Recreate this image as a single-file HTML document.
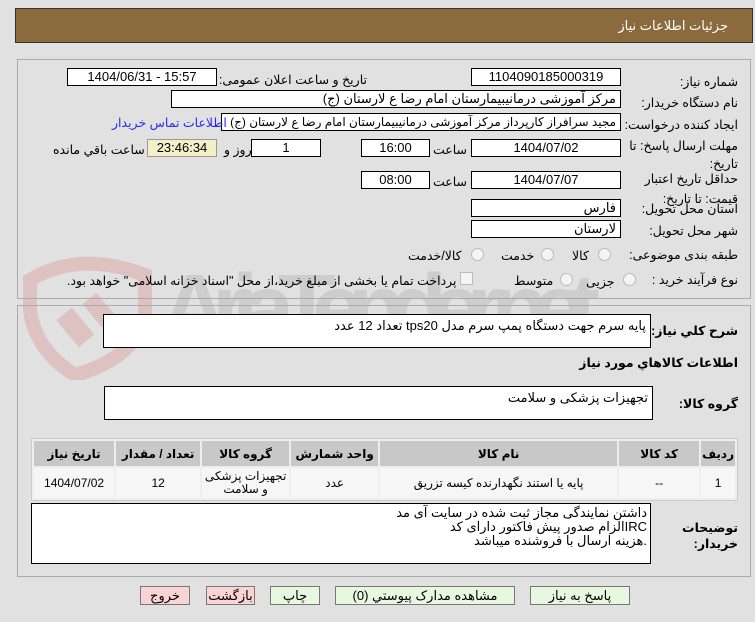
<!DOCTYPE html>
<html dir="rtl"><head><meta charset="utf-8"><style>
body{margin:0;width:755px;height:622px;background:#e1e1e1;font-family:"Liberation Sans","DejaVu Sans",sans-serif;font-size:12.5px;color:#000;position:relative;overflow:hidden}
.a{position:absolute;white-space:nowrap}
.in{position:absolute;background:#fff;border:1px solid #000;box-sizing:border-box;text-align:center;line-height:16px;font-size:13px;white-space:nowrap;overflow:hidden}
.r{text-align:right;padding-right:4px}
.lb{position:absolute;right:17px;text-align:right;white-space:nowrap}
.rad{position:absolute;width:11px;height:11px;border-radius:50%;border:1px solid #bbb;background:#f4f4f4}
.btn{position:absolute;height:19px;border:1px solid #777;box-sizing:border-box;text-align:center;line-height:17px;font-size:13px}
table{position:absolute;left:31px;top:438px;width:707px;border-collapse:separate;border-spacing:2px;background:#eee;border:1px solid #ccc;font-size:12px}
th{background:#c8c8c8;height:23px;font-weight:bold}
td{background:#f6f6f6;height:28px;text-align:center}
</style></head><body>
<div class="a" style="left:15px;top:8px;width:738px;height:35px;background:#8b6a3e;border:1px solid #333;box-sizing:border-box"></div>
<div class="a" style="right:27px;top:18px;color:#fff;font-size:13px">جزئیات اطلاعات نیاز</div>

<svg class="a" style="left:20px;top:250px;opacity:0.35" width="600" height="130" viewBox="0 0 600 130" direction="ltr">
<path d="M10 30 Q60 0 125 25 L125 70 Q110 110 55 125 Q15 100 10 60Z" fill="none" stroke="#d98a8a" stroke-width="14"/>
<rect x="45" y="60" width="20" height="35" fill="#d98a8a" transform="rotate(-40 55 77)"/>
<rect x="70" y="45" width="18" height="30" fill="#d98a8a" transform="rotate(-40 79 60)"/>
<text x="140" y="90" font-size="95" font-weight="bold" fill="#aaa" font-family="Liberation Sans" textLength="440">AriaTender.net</text>
</svg>

<div class="a" style="left:17px;top:59px;width:734px;height:240px;border:1px solid #aaa;box-sizing:border-box"></div>
<div class="a" style="left:17px;top:305px;width:734px;height:272px;border:1px solid #aaa;box-sizing:border-box"></div>

<div class="lb" style="top:74px">شماره نیاز:</div>
<div class="in" style="left:471px;top:68px;width:150px;height:18px">1104090185000319</div>
<div class="a" style="right:388px;top:72px">تاریخ و ساعت اعلان عمومی:</div>
<div class="in" style="left:67px;top:68px;width:150px;height:18px" dir="ltr">1404/06/31 - 15:57</div>

<div class="lb" style="top:95px">نام دستگاه خریدار:</div>
<div class="in r" style="left:171px;top:90px;width:450px;height:18px">مرکز آموزشی درمانیبیمارستان امام رضا  ع  لارستان (ج)</div>

<div class="lb" style="top:117px">ایجاد کننده درخواست:</div>
<div class="in r" style="left:221px;top:113px;width:400px;height:18px;font-size:12px">مجید سرافراز کارپرداز  مرکز آموزشی درمانیبیمارستان امام رضا  ع  لارستان (ج)</div>
<div class="a" style="left:112px;top:115px;color:#2a2aee">اطلاعات تماس خریدار</div>

<div class="lb" style="top:137px;line-height:18px">مهلت ارسال پاسخ: تا<br>تاریخ:</div>
<div class="in" style="left:471px;top:139px;width:150px;height:18px">1404/07/02</div>
<div class="a" style="left:433px;top:142px">ساعت</div>
<div class="in" style="left:361px;top:139px;width:69px;height:18px">16:00</div>
<div class="in" style="left:251px;top:139px;width:70px;height:18px">1</div>
<div class="a" style="left:224px;top:142px">روز و</div>
<div class="in" style="left:147px;top:139px;width:70px;height:18px;background:#f3f0c8;border-color:#999">23:46:34</div>
<div class="a" style="left:53px;top:142px">ساعت باقي مانده</div>

<div class="lb" style="top:169px;line-height:20px">حداقل تاریخ اعتبار<br>قیمت: تا تاریخ:</div>
<div class="in" style="left:471px;top:171px;width:150px;height:18px">1404/07/07</div>
<div class="a" style="left:433px;top:174px">ساعت</div>
<div class="in" style="left:361px;top:171px;width:69px;height:18px">08:00</div>

<div class="lb" style="top:201px">استان محل تحویل:</div>
<div class="in r" style="left:471px;top:199px;width:150px;height:18px">فارس</div>
<div class="lb" style="top:223px">شهر محل تحویل:</div>
<div class="in r" style="left:471px;top:220px;width:150px;height:18px">لارستان</div>

<div class="lb" style="top:247px">طبقه بندی موضوعی:</div>
<div class="rad" style="left:598px;top:248px"></div><div class="a" style="left:572px;top:248px">کالا</div>
<div class="rad" style="left:541px;top:248px"></div><div class="a" style="left:501px;top:248px">خدمت</div>
<div class="rad" style="left:471px;top:248px"></div><div class="a" style="left:408px;top:248px">کالا/خدمت</div>

<div class="lb" style="top:272px">نوع فرآیند خرید :</div>
<div class="rad" style="left:623px;top:273px"></div><div class="a" style="left:586px;top:274px">جزیی</div>
<div class="rad" style="left:560px;top:273px"></div><div class="a" style="left:514px;top:273px">متوسط</div>
<div class="a" style="left:460px;top:272px;width:11px;height:11px;border:1px solid #bbb;background:#f4f4f4"></div>
<div class="a" style="left:67px;top:273px">پرداخت تمام یا بخشی از مبلغ خرید،از محل "اسناد خزانه اسلامی" خواهد بود.</div>

<div class="lb" style="top:323px;font-weight:bold">شرح کلي نياز:</div>
<div class="in r" style="left:103px;top:314px;width:548px;height:34px;padding-top:3px">پایه سرم جهت دستگاه پمپ سرم مدل tps20  تعداد 12 عدد</div>
<div class="lb" style="top:355px;font-weight:bold">اطلاعات کالاهاي مورد نياز</div>
<div class="lb" style="top:396px;font-weight:bold">گروه کالا:</div>
<div class="in r" style="left:104px;top:386px;width:549px;height:34px;padding-top:3px">تجهیزات پزشکی و سلامت</div>

<table>
<tr><th style="width:26px">ردیف</th><th style="width:78px">کد کالا</th><th style="width:235px">نام کالا</th><th style="width:85px">واحد شمارش</th><th style="width:85px">گروه کالا</th><th style="width:82px">تعداد / مقدار</th><th>تاریخ نیاز</th></tr>
<tr><td>1</td><td>--</td><td>پایه یا استند نگهدارنده کیسه تزریق</td><td>عدد</td><td style="line-height:13px">تجهیزات پزشکی و سلامت</td><td>12</td><td>1404/07/02</td></tr>
</table>

<div class="lb" style="top:520px;font-weight:bold;line-height:16px">توضیحات<br>خریدار:</div>
<div class="in" style="left:31px;top:503px;width:620px;height:61px;text-align:right;padding-right:3px;padding-top:2px;line-height:14px;white-space:normal">داشتن نمایندگی مجاز ثبت شده در سایت آی مد<br>IRCالزام صدور پیش فاکتور دارای کد<br>.هزینه ارسال با فروشنده میباشد</div>

<div class="btn" style="left:530px;top:586px;width:100px;background:#e6f8e0">پاسخ به نیاز</div>
<div class="btn" style="left:335px;top:586px;width:180px;background:#e6f8e0">مشاهده مدارک پیوستي (0)</div>
<div class="btn" style="left:270px;top:586px;width:50px;background:#e6f8e0">چاپ</div>
<div class="btn" style="left:206px;top:586px;width:49px;background:#fad4d4">بازگشت</div>
<div class="btn" style="left:140px;top:586px;width:50px;background:#fad4d4">خروج</div>
</body></html>
